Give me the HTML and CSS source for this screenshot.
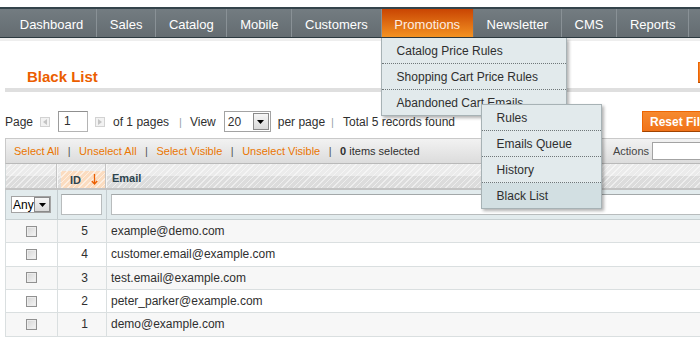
FILE: index.html
```html
<!DOCTYPE html>
<html lang="en">
<head>
<meta charset="utf-8">
<title>Black List</title>
<link rel="stylesheet" href="styles.css">
</head>
<body>
<div class="header-space"></div>
<nav class="nav-bar">
  <ul class="nav">
    <li class="nav-item">Dashboard</li>
    <li class="nav-item">Sales</li>
    <li class="nav-item">Catalog</li>
    <li class="nav-item">Mobile</li>
    <li class="nav-item">Customers</li>
    <li class="nav-item active">Promotions
      <ul class="menu">
        <li class="menu-item">Catalog Price Rules</li>
        <li class="menu-item">Shopping Cart Price Rules</li>
        <li class="menu-item last">Abandoned Cart Emails
          <ul class="menu submenu">
            <li class="menu-item">Rules</li>
            <li class="menu-item">Emails Queue</li>
            <li class="menu-item">History</li>
            <li class="menu-item last current">Black List</li>
          </ul>
        </li>
      </ul>
    </li>
    <li class="nav-item">Newsletter</li>
    <li class="nav-item">CMS</li>
    <li class="nav-item">Reports</li>
    <li class="nav-item">System</li>
  </ul>
</nav>
<div class="nav-shadow"></div>

<main class="content">
  <div class="content-header">
    <h3>Black List</h3>
    <button class="btn btn-add">Add New</button>
  </div>

  <div class="pager">
    <span>Page</span>
    <span class="pg-arrow pg-prev"><svg width="4" height="6" viewBox="0 0 4 6"><path d="M4 0 L0 3 L4 6 Z" fill="#c4c4c4"/></svg></span>
    <span class="pg-input">1</span>
    <span class="pg-arrow pg-next"><svg width="4" height="6" viewBox="0 0 4 6"><path d="M0 0 L4 3 L0 6 Z" fill="#c4c4c4"/></svg></span>
    <span class="pg-of">of 1 pages</span>
    <span class="pipe pipe-1">|</span>
    <span>View</span>
    <span class="sel sel-limit"><span>20</span><span class="sel-btn"><svg width="7" height="4" viewBox="0 0 7 4"><path d="M0 0 H7 L3.5 4 Z" fill="#000"/></svg></span></span>
    <span class="pg-per">per page</span>
    <span class="pipe pipe-2">|</span>
    <span>Total 5 records found</span>
    <span class="pager-buttons">
      <button class="btn btn-reset">Reset Filter</button>
      <button class="btn btn-search">Search</button>
    </span>
  </div>

  <div class="massaction">
    <a class="ma-link">Select All</a>
    <span class="ma-pipe">|</span>
    <a class="ma-link">Unselect All</a>
    <span class="ma-pipe">|</span>
    <a class="ma-link">Select Visible</a>
    <span class="ma-pipe">|</span>
    <a class="ma-link">Unselect Visible</a>
    <span class="ma-pipe">|</span>
    <span><strong>0</strong> items selected</span>
    <span class="ma-actions">
      <span class="ma-label">Actions</span>
      <span class="sel sel-actions"><span></span><span class="sel-btn"><svg width="7" height="4" viewBox="0 0 7 4"><path d="M0 0 H7 L3.5 4 Z" fill="#000"/></svg></span></span>
    </span>
  </div>

  <div class="grid">
    <div class="grid-row headings">
      <div class="cell"></div>
      <div class="cell cell-sort"><span class="sorted"><span>ID</span><svg class="sort-arrow" width="7" height="11" viewBox="0 0 7 11"><path d="M3.5 0 V9.5 M0.8 7 L3.5 10 L6.2 7" stroke="#eb5e00" stroke-width="1.3" fill="none"/></svg></span></div>
      <div class="cell">Email</div>
    </div>
    <div class="grid-row filter">
      <div class="cell"><span class="sel sel-any"><span>Any</span><span class="sel-btn"><svg width="7" height="4" viewBox="0 0 7 4"><path d="M0 0 H7 L3.5 4 Z" fill="#000"/></svg></span></span></div>
      <div class="cell"><span class="f-input f-id"></span></div>
      <div class="cell"><span class="f-input f-email"></span></div>
    </div>
    <div class="grid-row data odd">
      <div class="cell c-check"><input type="checkbox" class="cb"></div>
      <div class="cell c-id">5</div>
      <div class="cell c-email">example@demo.com</div>
    </div>
    <div class="grid-row data">
      <div class="cell c-check"><input type="checkbox" class="cb"></div>
      <div class="cell c-id">4</div>
      <div class="cell c-email">customer.email@example.com</div>
    </div>
    <div class="grid-row data odd">
      <div class="cell c-check"><input type="checkbox" class="cb"></div>
      <div class="cell c-id">3</div>
      <div class="cell c-email">test.email@example.com</div>
    </div>
    <div class="grid-row data">
      <div class="cell c-check"><input type="checkbox" class="cb"></div>
      <div class="cell c-id">2</div>
      <div class="cell c-email">peter_parker@example.com</div>
    </div>
    <div class="grid-row data odd">
      <div class="cell c-check"><input type="checkbox" class="cb"></div>
      <div class="cell c-id">1</div>
      <div class="cell c-email">demo@example.com</div>
    </div>
  </div>
</main>
</body>
</html>
```

FILE: styles.css
```css
* { box-sizing: border-box; }

html, body {
  margin: 0;
  padding: 0;
  overflow: hidden;
  background: #fff;
}

body {
  width: 790px;
  font-family: "Liberation Sans", Arial, sans-serif;
  font-size: 12px;
  color: #2f2f2f;
}

/* ---------- navigation ---------- */
.header-space { height: 7px; }

.nav-bar {
  position: relative;
  z-index: 10;
  height: 31px;
  border-top: 2px solid #34444b;
  border-bottom: 1px solid #2c393f;
  background: linear-gradient(#737c81, #646c71);
}

.nav {
  display: flex;
  margin: 0;
  padding: 0 0 0 7px;
  list-style: none;
  height: 28px;
}

.nav-item {
  position: relative;
  height: 28px;
  padding: 0 12.75px;
  line-height: 32px;
  font-size: 13px;
  color: #fff;
  white-space: nowrap;
  border-right: 1px solid #899196;
}

.nav-item.active {
  background: linear-gradient(#c94503, #f39222);
  border-right-color: #6e767b;
  color: #fdeee4;
}

.menu {
  position: absolute;
  left: -1px;
  top: 29px;
  width: 186px;
  margin: 0;
  padding: 0;
  list-style: none;
  background: #e2eaec;
  border: 1px solid #a7b2b5;
  border-top: 0;
  box-shadow: 2px 2px 3px rgba(0, 0, 0, 0.3);
}

.menu-item {
  position: relative;
  height: 26px;
  line-height: 26px;
  padding-left: 15px;
  font-size: 12px;
  color: #2f2f2f;
  white-space: nowrap;
  border-bottom: 1px dotted #6f7779;
}

.menu-item.last {
  height: 25px;
  border-bottom: 0;
}

.menu-item.current { background: #d2dfe2; }

.submenu {
  left: 99px;
  top: 14px;
  width: 121px;
  border-top: 1px solid #a7b2b5;
}

.nav-shadow {
  height: 3px;
  background: #eeeeee;
}

/* ---------- content ---------- */
.content {
  margin-left: 5px;
  width: 780px;
}

.content-header {
  display: flex;
  align-items: flex-end;
  height: 51px;
  border-bottom: 4px solid #dfdfdf;
}

.content-header h3 {
  margin: 0 0 2px 22px;
  font-size: 15px;
  line-height: 18px;
  font-weight: bold;
  color: #eb5e00;
}

.btn {
  height: 21px;
  padding: 0 7px;
  border: 1px solid;
  border-color: #ed6502 #a04300 #a04300 #ed6502;
  background: linear-gradient(#f68a30, #f0731a);
  color: #fff;
  font-family: "Liberation Sans", Arial, sans-serif;
  font-size: 12px;
  font-weight: bold;
  text-align: left;
  white-space: nowrap;
  overflow: hidden;
}

.btn-add {
  margin-left: auto;
  margin-bottom: 5px;
  width: 87px;
}

/* ---------- pager ---------- */
.pager {
  display: flex;
  align-items: center;
  height: 21px;
  margin: 19px 0 6px;
  white-space: nowrap;
}

.pg-arrow {
  display: flex;
  align-items: center;
  justify-content: center;
  width: 10px;
  height: 10px;
  border: 1px solid #d2d2d2;
  background: #f2f2f2;
}

.pg-prev { margin-left: 7px; }
.pg-next { margin-left: 7px; }

.pg-input {
  width: 30px;
  height: 21px;
  margin-left: 8px;
  padding-left: 5px;
  line-height: 19px;
  border: 1px solid #b4b4b4;
  border-top-color: #8f8f8f;
  border-left-color: #9c9c9c;
  background: #fff;
}

.pg-of { margin-left: 8px; }

.pipe {
  color: #9aa4a8;
  font-size: 11px;
}

.pipe-1 { margin: 0 8px 0 10px; }
.pipe-2 { margin: 0 9px 0 6px; }

.sel {
  display: flex;
  align-items: center;
  justify-content: space-between;
  border: 1px solid #a3a3a3;
  background: #fff;
}

.sel-btn {
  display: flex;
  align-items: center;
  justify-content: center;
  width: 16px;
  border: 1px solid #8a8a8a;
  background: linear-gradient(#f6f6f6, #d9d9d9);
}

.sel-limit {
  width: 47px;
  height: 21px;
  margin-left: 8px;
  padding: 0 1px 0 3px;
}

.sel-limit .sel-btn { height: 17px; }

.pg-per { margin-left: 7px; }

.pager-buttons {
  display: flex;
  gap: 4px;
  margin-left: auto;
}

.btn-reset { width: 82px; }
.btn-search { width: 57px; }

/* ---------- massaction ---------- */
.massaction {
  display: flex;
  align-items: center;
  height: 26px;
  padding-left: 8px;
  border: 1px solid #c9c9c9;
  border-bottom-color: #b9b9b9;
  background: linear-gradient(#f2f2f2, #dcdcdc);
  font-size: 11px;
  white-space: nowrap;
}

.ma-link { color: #ea7601; }

.ma-pipe {
  margin: 0 8.5px;
  color: #555;
}

.ma-actions {
  display: flex;
  align-items: center;
  margin-left: auto;
  padding-right: 12px;
}

.ma-label { color: #444; }

.sel-actions {
  width: 120px;
  height: 18px;
  margin-left: 3px;
  padding: 0 1px 0 3px;
}

.sel-actions .sel-btn { height: 14px; }

/* ---------- grid ---------- */
.grid { width: 780px; }

.grid-row {
  display: grid;
  grid-template-columns: 52px 49px 1fr;
}

.cell {
  display: flex;
  align-items: center;
  border-left: 1px solid #dadfe0;
  min-width: 0;
}

.headings {
  height: 26px;
  border-bottom: 2px solid #c3c3c3;
  background:
    repeating-linear-gradient(135deg, rgba(255,255,255,0.5) 0 1px, rgba(255,255,255,0) 1px 4px),
    linear-gradient(#ebebeb 0 50%, #dcdcdc 50% 100%);
  font-size: 11px;
  font-weight: bold;
  color: #2d444f;
}

.headings .cell {
  padding-top: 4px;
  border-left: 1px solid #f7f7f7;
  box-shadow: -1px 0 0 #c4c4c4;
}

.headings .cell:first-child {
  border-left-color: #cfd5d6;
  box-shadow: none;
}

.headings .cell:last-child { padding-left: 5px; }

.headings .cell-sort {
  align-items: flex-end;
  padding-top: 0;
}

.sorted {
  display: flex;
  align-items: center;
  width: 44px;
  height: 17px;
  margin-left: 3px;
  padding-left: 9px;
  background:
    repeating-linear-gradient(135deg, rgba(255,255,255,0.55) 0 1px, rgba(255,255,255,0) 1px 4px),
    #fbdcc0;
}

.sort-arrow { margin-left: 10px; }

.filter {
  height: 30px;
  border-bottom: 1px solid #c7d0d2;
  background: #e2ebed;
}

.filter .cell { border-left-color: #c4cdd0; }

.filter .cell:first-child { padding-left: 5px; }
.filter .cell:nth-child(2) { padding-left: 3px; }
.filter .cell:nth-child(3) { padding-left: 4px; }

.sel-any {
  width: 40px;
  height: 17px;
  padding: 0 0 0 1px;
  font-size: 12px;
  color: #000;
}

.sel-any .sel-btn { height: 15px; }

.f-input {
  display: block;
  height: 21px;
  border: 1px solid #b8bcbd;
  border-top-color: #a3a8a9;
  background: #fff;
}

.f-id { width: 41px; }
.f-email { width: 672px; }

.data {
  height: 23.33px;
  border-bottom: 1px solid #dadfe0;
  background: #fff;
}

.data.odd { background: #f7f7f7; }

.c-check { justify-content: center; }

.cb {
  appearance: none;
  -webkit-appearance: none;
  width: 11px;
  height: 11px;
  margin: 0;
  border: 1px solid #919191;
  background: linear-gradient(135deg, #d4d4d4, #f6f6f6);
  box-shadow: inset 0 0 0 1px #ececec;
}

.c-id {
  justify-content: flex-end;
  padding-right: 18px;
}

.c-email {
  padding-left: 4px;
  white-space: nowrap;
}
```
